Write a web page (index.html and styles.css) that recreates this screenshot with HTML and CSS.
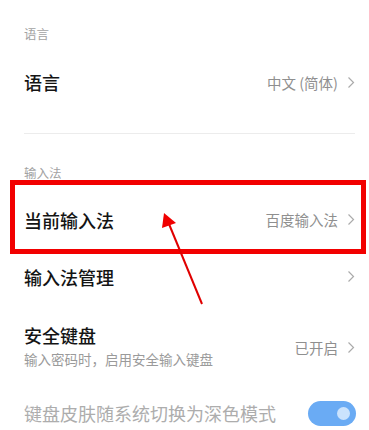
FILE: index.html
```html
<!DOCTYPE html>
<html lang="zh-CN">
<head>
<meta charset="utf-8">
<link rel="stylesheet" href="styles.css">
</head>
<body>
<div class="page">
  <div class="group-title first">语言</div>
  <div class="row row-lang">
    <span class="title">语言</span>
    <span class="value">中文 (简体)<svg class="chev" viewBox="0 0 8 12"><polyline points="1.5,1 6.5,6 1.5,11"/></svg></span>
  </div>
  <div class="divider"></div>
  <div class="group-title second">输入法</div>
  <div class="row row-std current">
    <span class="title">当前输入法</span>
    <span class="value">百度输入法<svg class="chev" viewBox="0 0 8 12"><polyline points="1.5,1 6.5,6 1.5,11"/></svg></span>
  </div>
  <div class="row row-std">
    <span class="title">输入法管理</span>
    <span class="value"><svg class="chev" viewBox="0 0 8 12"><polyline points="1.5,1 6.5,6 1.5,11"/></svg></span>
  </div>
  <div class="row row-secure">
    <div class="text-block">
      <div class="title">安全键盘</div>
      <div class="sub">输入密码时，启用安全输入键盘</div>
    </div>
    <span class="value">已开启<svg class="chev" viewBox="0 0 8 12"><polyline points="1.5,1 6.5,6 1.5,11"/></svg></span>
  </div>
  <div class="row row-toggle">
    <span class="title disabled">键盘皮肤随系统切换为深色模式</span>
    <span class="toggle"><span class="knob"></span></span>
  </div>
</div>
<div class="highlight"></div>
<svg class="arrow" viewBox="0 0 369 430">
  <line x1="202" y1="304" x2="169" y2="224"/>
  <polygon points="164,213 176,223 162,228"/>
</svg>
</body>
</html>
```
FILE: styles.css
```css
html, body {
  margin: 0;
  padding: 0;
  background: #fff;
}
body {
  position: relative;
  width: 369px;
  height: 430px;
  overflow: hidden;
  font-family: "Noto Sans CJK SC", "Noto Sans", sans-serif;
}
.page {
  padding: 0 14px 0 24px;
}
.group-title {
  font-size: 12.5px;
  line-height: 24px;
  color: #a3a3a3;
}
.group-title.first {
  padding-top: 22px;
}
.group-title.second {
  margin-top: 27px;
}
.row {
  display: flex;
  align-items: center;
  justify-content: space-between;
}
.row-lang {
  height: 72px;
}
.divider {
  margin-top: 15px;
  height: 1px;
  background: #ececec;
}
.row-std {
  height: 57px;
}
.row-std.current {
  margin-top: 6px;
}
.row-secure {
  height: 84px;
}
.row-toggle {
  height: 48px;
}
.title {
  font-size: 18px;
  line-height: 24px;
  font-weight: 500;
  color: #141414;
}
.title.disabled {
  font-weight: 400;
  color: #adadad;
}
.sub {
  font-size: 13.5px;
  line-height: 24px;
  color: #9a9a9a;
}
.value {
  display: flex;
  align-items: center;
  font-size: 14.5px;
  color: #8f8f8f;
}
.chev {
  width: 8px;
  height: 13px;
  margin-left: 9px;
  fill: none;
  stroke: #ababab;
  stroke-width: 1.2;
}
.toggle {
  position: relative;
  width: 48px;
  height: 25px;
  border-radius: 13px;
  background: #6aabf4;
  margin-right: -1px;
}
.knob {
  position: absolute;
  right: 6px;
  top: 6px;
  width: 13px;
  height: 13px;
  border-radius: 50%;
  background: #cbe3fd;
}
.highlight {
  position: absolute;
  left: 10px;
  top: 180px;
  width: 346px;
  height: 64px;
  border: 5.5px solid #f20000;
}
.arrow {
  position: absolute;
  left: 0;
  top: 0;
  width: 369px;
  height: 430px;
}
.arrow line {
  stroke: #e00000;
  stroke-width: 2;
}
.arrow polygon {
  fill: #f00000;
}
```
